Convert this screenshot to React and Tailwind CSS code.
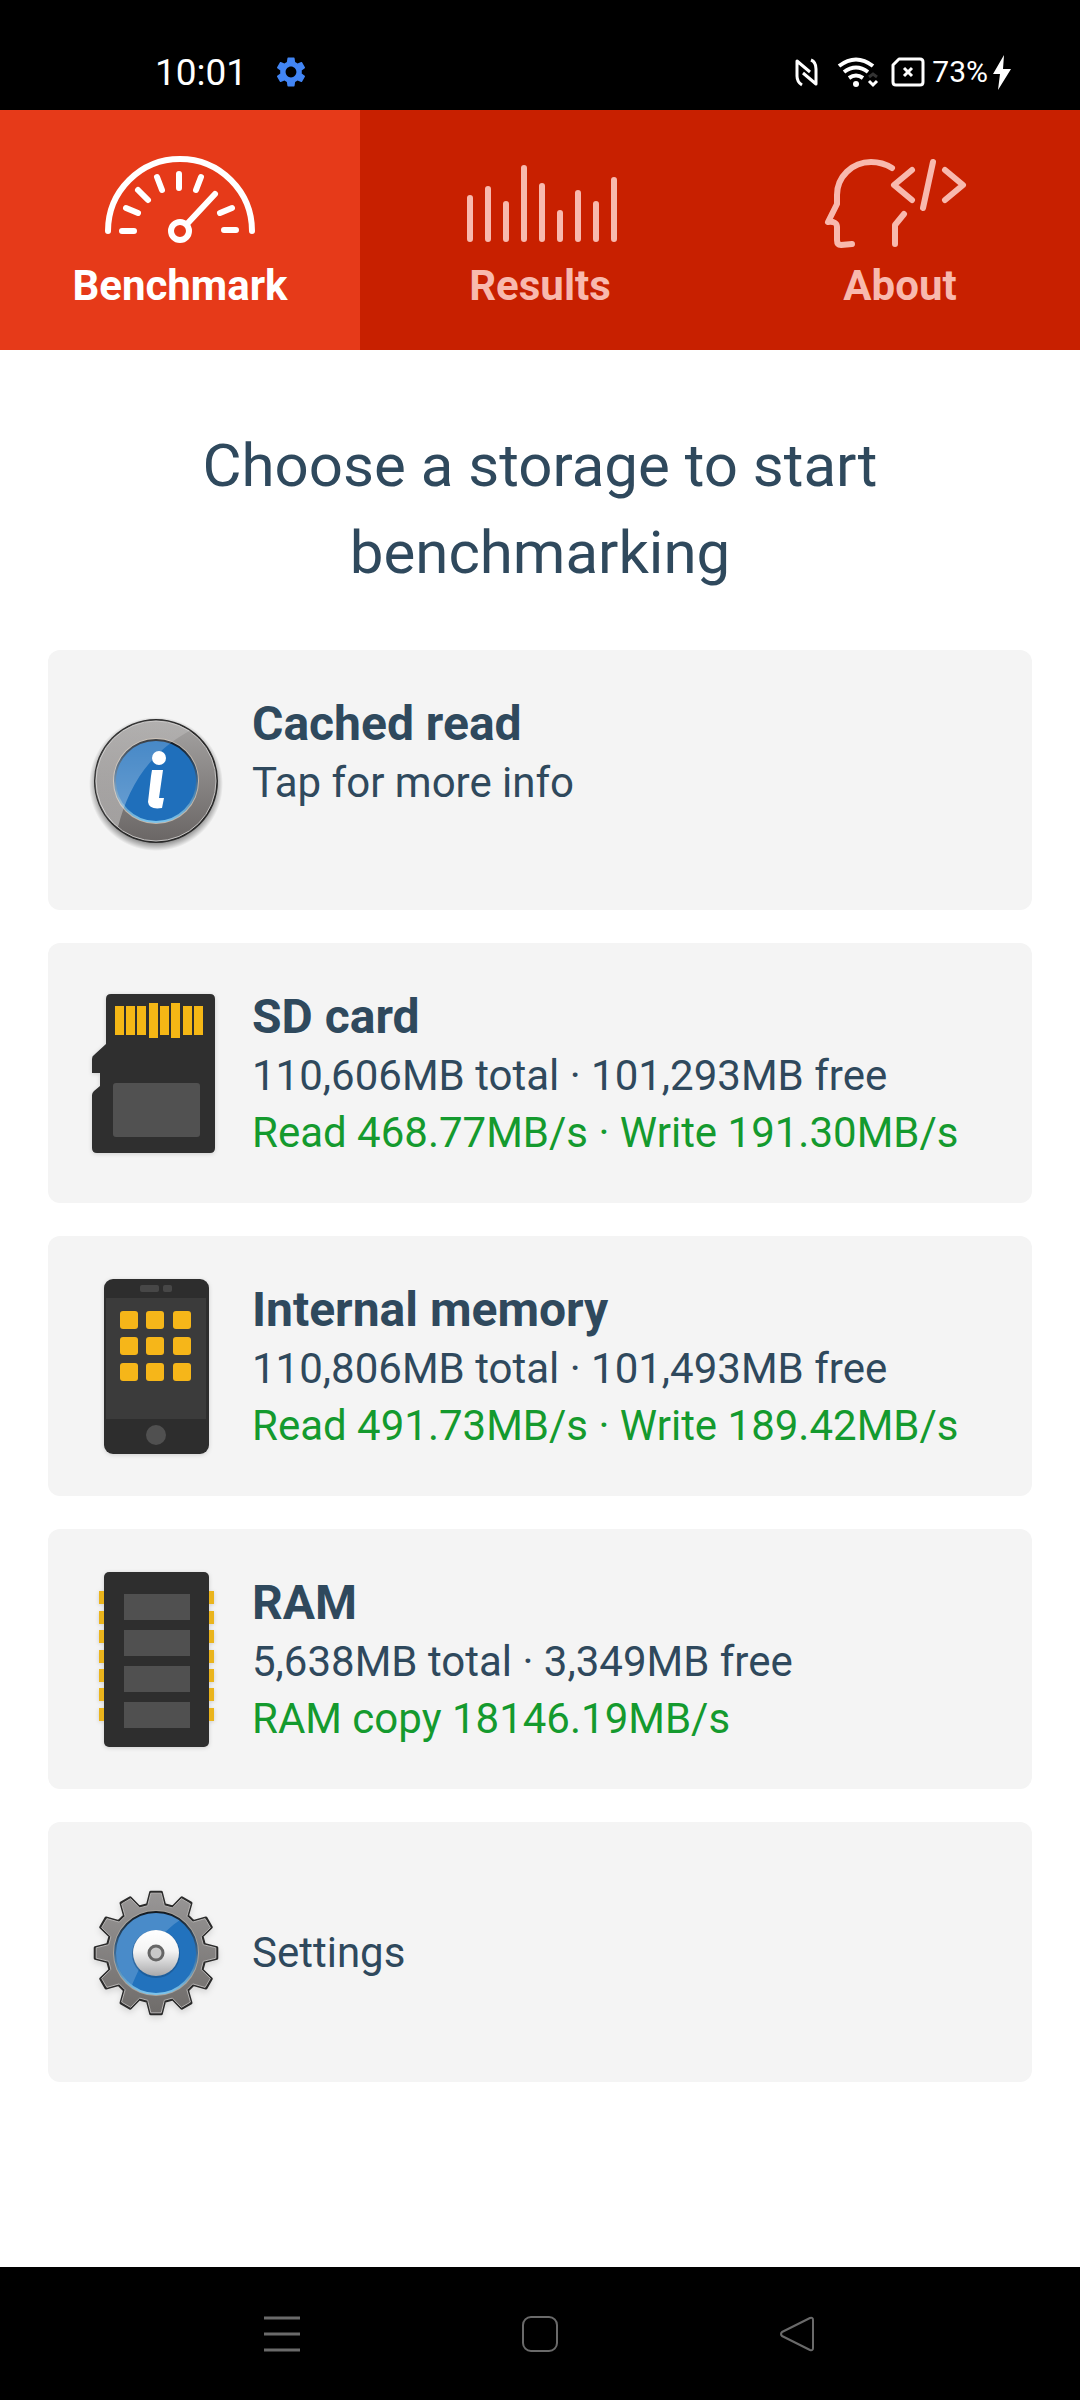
import React, { useState } from 'react';
import { MdSettings } from 'react-icons/md';

const GaugeIcon = () => (
  <svg viewBox="100 156 160 92" className="w-40 h-[92px]" fill="none" stroke="currentColor" strokeWidth="6" strokeLinecap="round" aria-hidden="true">
    <path d="M108 231a72 72 0 0 1 144 0" />
    <circle cx="180" cy="231" r="9" />
    <path d="M187 224L215 194" />
    <path d="M122 231h12M126 208l12 5M138 190l10 10M157 177l5 13M179 174v14M201 177l-5 13M232 208l-12 5M224 230h12" />
  </svg>
);

const BarsIcon = () => (
  <svg viewBox="459 156 160 92" className="w-40 h-[92px]" fill="none" stroke="currentColor" strokeWidth="6" strokeLinecap="round" aria-hidden="true">
    <path d="M469 198V239M487 189V239M505 204V239M523 168V239M541 186V239M559 213V239M577 193V239M595 204V239M613 180V239" />
  </svg>
);

const HeadIcon = () => (
  <svg viewBox="820 156 160 92" className="w-40 h-[92px]" fill="none" stroke="currentColor" strokeWidth="6" strokeLinecap="round" strokeLinejoin="round" aria-hidden="true">
    <path d="M892 168C884 163 877 162 871 162C852 162 837 177 837 195V204L828 222Q837 221 837 227V240Q837 245 841 245L852 244" />
    <path d="M904 214L895 225V244" />
    <path d="M912 170L894 185L912 200M933 162L923 208M945 170L963 185L945 200" />
  </svg>
);

const InfoIcon = () => (
  <svg viewBox="1 0 144 200" className="w-36 h-[200px] shrink-0" aria-hidden="true">
    <defs>
      <linearGradient id="infoRing" x1="0" y1="0" x2="0" y2="1">
        <stop offset="0" stopColor="#a5a3a2" />
        <stop offset="1" stopColor="#6a6665" />
      </linearGradient>
      <linearGradient id="infoGloss" x1="0" y1="0" x2="0" y2="1">
        <stop offset="0" stopColor="#fff" stopOpacity="0.12" />
        <stop offset="1" stopColor="#fff" stopOpacity="0.35" />
      </linearGradient>
      <linearGradient id="infoRim" x1="0" y1="0" x2="0" y2="1">
        <stop offset="0" stopColor="#10151c" />
        <stop offset="0.5" stopColor="#3d6a94" />
        <stop offset="1" stopColor="#7cc4ec" />
      </linearGradient>
      <radialGradient id="infoShade">
        <stop offset="0.85" stopColor="#000" stopOpacity="0.5" />
        <stop offset="1" stopColor="#000" stopOpacity="0" />
      </radialGradient>
      <clipPath id="infoClip"><circle cx="73" cy="101" r="61" /></clipPath>
    </defs>
    <circle cx="73" cy="104" r="67" fill="url(#infoShade)" />
    <circle cx="73" cy="101" r="62" fill="#2b2b2b" />
    <circle cx="73" cy="101" r="60" fill="url(#infoRing)" stroke="#c4c2c1" strokeWidth="1" />
    <circle cx="73" cy="101" r="43" fill="#c3b7aa" />
    <circle cx="73" cy="101" r="41" fill="#1f6fbb" stroke="url(#infoRim)" strokeWidth="2" />
    <path d="M35 147C45 108 65 73 108 50L60 30L5 50L0 120Z" fill="url(#infoGloss)" clipPath="url(#infoClip)" />
    <circle cx="76" cy="78" r="7" fill="#fff" />
    <path d="M69 90H80L76 118H81L79 128Q66 130 65 122L68 96Z" fill="#fff" />
  </svg>
);

const SdIcon = () => (
  <svg viewBox="0 0 144 200" className="w-36 h-[200px] shrink-0 drop-shadow-sm" aria-hidden="true">
    <path d="M27 21H126Q131 21 131 26V175Q131 180 126 180H13Q8 180 8 175V122Q8 120 10 118L16 113V100H8V86Q8 83 10 82L22 71V26Q22 21 27 21Z" fill="#2f2f2f" />
    {[31, 42, 53, 76, 99, 110].map((x) => (
      <rect key={x} x={x} y="33" width="9" height="29" fill="#f5b715" />
    ))}
    {[65, 87].map((x) => (
      <rect key={x} x={x} y="30" width="9" height="35" fill="#f5b715" />
    ))}
    <rect x="29" y="110" width="87" height="54" rx="3" fill="#515151" />
  </svg>
);

const PhoneIcon = () => (
  <svg viewBox="0 0 144 200" className="w-36 h-[200px] shrink-0 drop-shadow-sm" aria-hidden="true">
    <rect x="20" y="13" width="105" height="175" rx="9" fill="#2d2d2d" />
    <rect x="22" y="32" width="100" height="121" fill="#3b3b3b" />
    <rect x="56" y="19" width="19" height="7" rx="2" fill="#474747" />
    <rect x="79" y="19" width="9" height="7" rx="2" fill="#474747" />
    {[45, 71, 97].map((y) => [36, 62, 89].map((x) => (
      <rect key={`${x}-${y}`} x={x} y={y} width="18" height="18" rx="3" fill="#f6b619" />
    )))}
    <circle cx="72" cy="169" r="10" fill="#505050" />
  </svg>
);

const RamIcon = () => (
  <svg viewBox="0 0 144 200" className="w-36 h-[200px] shrink-0 drop-shadow-sm" aria-hidden="true">
    {[32, 52, 71, 91, 110, 129, 149].map((y) => (
      <path key={y} d={`M15 ${y}h6v13h-6zM124 ${y}h6v13h-6z`} fill="#eab41c" />
    ))}
    <rect x="20" y="13" width="105" height="175" rx="5" fill="#2e2e2e" />
    {[35, 71, 107, 143].map((y) => (
      <rect key={y} x="40" y={y} width="66" height="26" fill="#505050" />
    ))}
  </svg>
);

// twelve-tooth outline around 73,101
const gearPoints = (outer, inner) => {
  const pts = [];
  for (let i = 0; i < 12; i++) {
    [[-10, inner], [-5, outer], [5, outer], [10, inner]].forEach(([deg, r]) => {
      const a = ((i * 30 + deg) * Math.PI) / 180;
      pts.push(`${(73 + r * Math.sin(a)).toFixed(1)},${(101 - r * Math.cos(a)).toFixed(1)}`);
    });
  }
  return pts.join(' ');
};

const GearIcon = () => (
  <svg viewBox="1 0 144 200" className="w-36 h-[200px] shrink-0 drop-shadow-md" aria-hidden="true">
    <defs>
      <linearGradient id="gearBody" x1="0" y1="0" x2="0" y2="1">
        <stop offset="0" stopColor="#989696" />
        <stop offset="1" stopColor="#6f6c6a" />
      </linearGradient>
      <linearGradient id="gearRim" x1="0" y1="0" x2="0" y2="1">
        <stop offset="0" stopColor="#141a20" />
        <stop offset="0.5" stopColor="#3d6a94" />
        <stop offset="1" stopColor="#7cc4ec" />
      </linearGradient>
      <linearGradient id="gearDisc" x1="0" y1="0" x2="0" y2="1">
        <stop offset="0" stopColor="#fff" />
        <stop offset="0.45" stopColor="#f4f4f4" />
        <stop offset="1" stopColor="#a9a9ab" />
      </linearGradient>
      <clipPath id="gearClip"><circle cx="73" cy="101" r="40" /></clipPath>
    </defs>
    <polygon points={gearPoints(61, 49)} fill="#2b2b2b" stroke="#2b2b2b" strokeWidth="3" strokeLinejoin="round" />
    <polygon points={gearPoints(60, 48)} fill="url(#gearBody)" stroke="#b5b3b2" strokeWidth="1" strokeLinejoin="round" />
    <circle cx="73" cy="101" r="43" fill="#aaa49c" />
    <circle cx="73" cy="101" r="41" fill="#2272bd" stroke="url(#gearRim)" strokeWidth="2" />
    <path d="M48 136C58 110 74 82 100 66L60 50L25 60L20 140Z" fill="#fff" fillOpacity="0.18" clipPath="url(#gearClip)" />
    <circle cx="73" cy="102" r="24" fill="#174a7c" fillOpacity="0.5" />
    <circle cx="73" cy="101" r="23" fill="url(#gearDisc)" />
    <circle cx="73" cy="101" r="7" fill="#c9c9c9" stroke="#666" strokeWidth="3" />
  </svg>
);

const TABS = [
  { id: 'benchmark', label: 'Benchmark', icon: GaugeIcon },
  { id: 'results', label: 'Results', icon: BarsIcon },
  { id: 'about', label: 'About', icon: HeadIcon },
];

const STORAGES = [
  { id: 'cached', title: 'Cached read', info: 'Tap for more info', icon: InfoIcon },
  { id: 'sd', title: 'SD card', info: '110,606MB total · 101,293MB free', speed: 'Read 468.77MB/s · Write 191.30MB/s', icon: SdIcon },
  { id: 'internal', title: 'Internal memory', info: '110,806MB total · 101,493MB free', speed: 'Read 491.73MB/s · Write 189.42MB/s', icon: PhoneIcon },
  { id: 'ram', title: 'RAM', info: '5,638MB total · 3,349MB free', speed: 'RAM copy 18146.19MB/s', icon: RamIcon },
];

const StatusBar = () => (
  <div className="h-[110px] pt-[34px] pl-[155px] pr-[68px] flex items-center justify-between bg-black text-white">
    <div className="flex items-center gap-[26px]">
      <span className="text-[37px] leading-none">10:01</span>
      <MdSettings className="size-9 text-[#4285f4]" />
    </div>
    <div className="flex items-center">
      <svg viewBox="794 56 24 32" className="w-6 h-8 mr-[18px]" fill="none" stroke="currentColor" strokeWidth="3" strokeLinejoin="round" aria-hidden="true">
        <path d="M801 85Q796 82 796 76V61L809 72M810 60Q815 62 815 69V84L802 73" />
      </svg>
      <svg viewBox="836 56 42 32" className="w-[42px] h-8 mr-3" fill="none" stroke="currentColor" strokeWidth="4" aria-hidden="true">
        <path d="M838 66Q855 53 872 66M843 72Q855 63 867 72M848 78Q855 73 862 78" />
        <circle cx="855" cy="84" r="3" fill="currentColor" stroke="none" />
        <path d="M868 77L872 74L876 77" stroke="#333" strokeWidth="3" />
        <path d="M868 81L872 85L876 81" strokeWidth="3" />
      </svg>
      <svg viewBox="890 56 34 32" className="w-[34px] h-8 mr-[7px]" fill="none" stroke="currentColor" strokeWidth="3" strokeLinejoin="round" aria-hidden="true">
        <path d="M898 59H919Q922 59 922 62V82Q922 85 919 85H895Q892 85 892 82V65Z" />
        <path d="M903 68L911 76M911 68L903 76" />
      </svg>
      <span className="text-[30px] leading-none">73%</span>
      <svg viewBox="992 54 20 36" className="w-5 h-9 ml-1" fill="currentColor" aria-hidden="true">
        <path d="M1004 55L993 74H1000L998 90L1011 69H1003Z" />
      </svg>
    </div>
  </div>
);

const SystemNav = () => (
  <nav aria-label="System" className="h-[133px] flex items-center justify-center gap-[222px] bg-black text-[#6a6a6a]">
    <button aria-label="Recent apps">
      <svg viewBox="0 0 36 36" className="size-9" stroke="currentColor" strokeWidth="3">
        <path d="M0 2h36M0 18h36M0 34h36" />
      </svg>
    </button>
    <button aria-label="Home">
      <svg viewBox="0 0 36 36" className="size-9" fill="none" stroke="currentColor" strokeWidth="2">
        <rect x="1" y="1" width="34" height="34" rx="8" />
      </svg>
    </button>
    <button aria-label="Back">
      <svg viewBox="0 0 36 36" className="size-9" fill="none" stroke="currentColor" strokeWidth="2" strokeLinejoin="round">
        <path d="M2 16L30 2Q33 1 33 4V32Q33 35 30 34L2 20Q0 18 2 16Z" />
      </svg>
    </button>
  </nav>
);

const App = () => {
  const [tab, setTab] = useState('benchmark');

  return (
    <div className="min-h-screen flex flex-col bg-white font-['Roboto',sans-serif] text-[#2f495d]">
      <StatusBar />

      {/* TABS */}
      <nav aria-label="Sections" className="grid grid-cols-3 bg-[#c82000]">
        {TABS.map(({ id, label, icon: Icon }) => (
          <button
            key={id}
            onClick={() => setTab(id)}
            aria-current={tab === id ? 'page' : undefined}
            className={`flex flex-col items-center gap-[9px] pt-[46px] pb-9 ${tab === id ? 'bg-[#e63a19] text-white' : 'text-[#f8b9ae]'}`}
          >
            <Icon />
            <span className="text-[42px] leading-[57px] font-bold">{label}</span>
          </button>
        ))}
      </nav>

      <main className="flex-1 px-12 pt-[72px] pb-12">
        <h1 className="text-[60px] leading-[87px] text-center mb-[54px]">Choose a storage to start benchmarking</h1>

        {/* STORAGE LIST */}
        <div className="flex flex-col gap-[33px]">
          {STORAGES.map(({ id, title, info, speed, icon: Icon }) => (
            <button key={id} className="w-full h-[260px] pl-9 pr-6 flex items-center gap-6 rounded-xl bg-[#f4f4f4] text-left">
              <Icon />
              <span className="self-start pt-11 flex flex-col text-[42px] leading-[57px]">
                <span className="text-[48px] leading-[60px] font-bold">{title}</span>
                <span>{info}</span>
                {speed && <span className="text-[#149a2e]">{speed}</span>}
              </span>
            </button>
          ))}
          <button className="w-full h-[260px] pl-9 pr-6 flex items-center gap-6 rounded-xl bg-[#f4f4f4] text-left">
            <GearIcon />
            <span className="text-[42px] leading-[57px]">Settings</span>
          </button>
        </div>
      </main>

      <SystemNav />
    </div>
  );
};

export default App;
